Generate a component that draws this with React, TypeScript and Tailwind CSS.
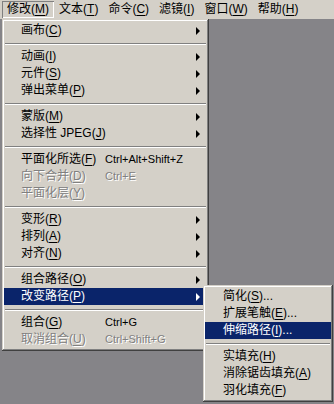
import React from 'react';

type Item =
  | { sep: true }
  | {
      sep?: false;
      label: string;
      mn: string;
      dots?: boolean;
      shortcut?: string;
      arrow?: boolean;
      disabled?: boolean;
      active?: boolean;
    };

const mainItems: Item[] = [
  { label: '画布', mn: 'C', arrow: true },
  { sep: true },
  { label: '动画', mn: 'I', arrow: true },
  { label: '元件', mn: 'S', arrow: true },
  { label: '弹出菜单', mn: 'P', arrow: true },
  { sep: true },
  { label: '蒙版', mn: 'M', arrow: true },
  { label: '选择性 JPEG', mn: 'J', arrow: true },
  { sep: true },
  { label: '平面化所选', mn: 'F', shortcut: 'Ctrl+Alt+Shift+Z' },
  { label: '向下合并', mn: 'D', shortcut: 'Ctrl+E', disabled: true },
  { label: '平面化层', mn: 'Y', disabled: true },
  { sep: true },
  { label: '变形', mn: 'R', arrow: true },
  { label: '排列', mn: 'A', arrow: true },
  { label: '对齐', mn: 'N', arrow: true },
  { sep: true },
  { label: '组合路径', mn: 'O', arrow: true },
  { label: '改变路径', mn: 'P', arrow: true, active: true },
  { sep: true },
  { label: '组合', mn: 'G', shortcut: 'Ctrl+G' },
  { label: '取消组合', mn: 'U', shortcut: 'Ctrl+Shift+G', disabled: true },
];

const subItems: Item[] = [
  { label: '简化', mn: 'S', dots: true },
  { label: '扩展笔触', mn: 'E', dots: true },
  { label: '伸缩路径', mn: 'I', dots: true, active: true },
  { sep: true },
  { label: '实填充', mn: 'H' },
  { label: '消除锯齿填充', mn: 'A' },
  { label: '羽化填充', mn: 'F' },
];

const bevel =
  'bg-[#d4d0c8] shadow-[inset_-1px_-1px_#404040,inset_1px_1px_#d4d0c8,inset_-2px_-2px_#808080,inset_2px_2px_#ffffff]';

const Label = ({ text, mn, dots }: { text: string; mn: string; dots?: boolean }) => (
  <span className="whitespace-pre">
    {text}(<u className="underline-offset-[2px]">{mn}</u>){dots ? '...' : ''}
  </span>
);

const Menu = ({ items, indent, labelWidth }: { items: Item[]; indent: string; labelWidth?: string }) => (
  <div className="flex flex-col">
    {items.map((it, i) => {
      if (it.sep) {
        return (
          <div key={i} className="h-[9px] pt-[4px] px-[1px]">
            <div className="h-[2px] border-t border-t-[#808080] border-b border-b-white" />
          </div>
        );
      }
      const tone = it.active
        ? 'bg-[#0a246a] text-white'
        : it.disabled
        ? 'text-[#808080] [text-shadow:1px_1px_0_#ffffff]'
        : 'text-black';
      return (
        <div key={i} className={`h-[17px] flex items-center ${tone}`}>
          <div className={`${indent} ${labelWidth ?? ''} shrink-0`}>
            <Label text={it.label} mn={it.mn} dots={it.dots} />
          </div>
          {it.shortcut && <span className="font-['Liberation_Sans',sans-serif] text-[11px]">{it.shortcut}</span>}
          {it.arrow && (
            <span
              className={`ml-auto mr-[7px] w-0 h-0 border-y-[4px] border-y-transparent border-l-[4px] ${
                it.active ? 'border-l-white' : 'border-l-black'
              }`}
            />
          )}
        </div>
      );
    })}
  </div>
);

const bar = [
  { t: '修改', m: 'M' },
  { t: '文本', m: 'T' },
  { t: '命令', m: 'C' },
  { t: '滤镜', m: 'I' },
  { t: '窗口', m: 'W' },
  { t: '帮助', m: 'H' },
];

export default function App() {
  return (
    <div className="relative w-[334px] h-[404px] overflow-hidden flex flex-col font-['Liberation_Sans','Noto_Sans_CJK_SC',sans-serif] text-[12px] leading-[17px] select-none">
      {/* menubar */}
      <div className="h-[19px] bg-[#d4d0c8] flex items-center pl-[2px] shrink-0">
        {bar.map((b, i) => (
          <div
            key={b.t}
            className={`h-[17px] px-[5px] flex items-center ${
              i === 0 ? 'shadow-[inset_1px_1px_#808080,inset_-1px_-1px_#ffffff]' : ''
            }`}
          >
            <Label text={b.t} mn={b.m} />
          </div>
        ))}
      </div>

      {/* canvas area */}
      <div className="flex-1 bg-[#858488]" />

      {/* modify menu */}
      <div className={`absolute left-[2px] top-[19px] w-[207px] py-[3px] px-[2px] ${bevel}`}>
        <Menu items={mainItems} indent="pl-[17px]" labelWidth="w-[101px]" />
      </div>

      {/* alter path submenu */}
      <div className={`absolute left-[203px] top-[285px] w-[130px] py-[3px] px-[2px] ${bevel}`}>
        <Menu items={subItems} indent="pl-[18px]" />
      </div>
    </div>
  );
}
